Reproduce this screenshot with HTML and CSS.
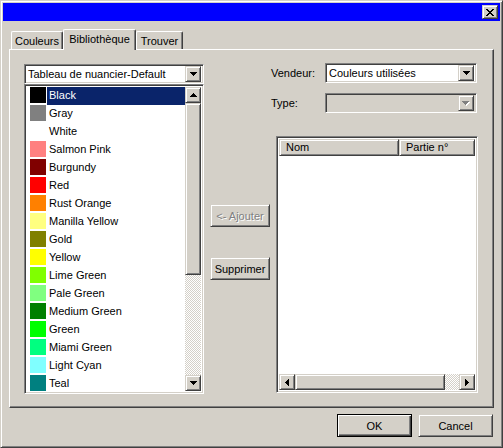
FILE: index.html
```html
<!DOCTYPE html>
<html lang="fr">
  <head>
    <meta charset="UTF-8" />
    <title>Bibliothèque de couleurs</title>
    <link rel="stylesheet" href="styles.css">
  </head>
  <body>
    <div class="window">
      <!-- barre de titre -->
      <div class="titlebar">
        <span class="close-btn raised">
          <svg width="8" height="7" viewBox="0 0 8 7" shape-rendering="crispEdges">
            <path d="M0 0h2v1h-2z M6 0h2v1h-2z M1 1h2v1h-2z M5 1h2v1h-2z M2 2h4v1h-4z M3 3h2v1h-2z M2 4h4v1h-4z M1 5h2v1h-2z M5 5h2v1h-2z M0 6h2v1h-2z M6 6h2v1h-2z" fill="#000"/>
          </svg>
        </span>
      </div>

      <div class="dialog-body">
        <!-- onglets -->
        <div class="tabs">
          <div class="tab">Couleurs</div>
          <div class="tab active">Bibliothèque</div>
          <div class="tab">Trouver</div>
        </div>

        <div class="panel">
          <!-- colonne bibliothèque -->
          <div class="col-library">
            <div class="combo sunken">
              <span class="combo-text">Tableau de nuancier-Default</span>
              <span class="arrow-btn raised">
                <svg width="7" height="4" viewBox="0 0 7 4" shape-rendering="crispEdges"><path d="M0 0h7v1h-7z M1 1h5v1h-5z M2 2h3v1h-3z M3 3h1v1h-1z" fill="#000"/></svg>
              </span>
            </div>
            <div class="swatch-list sunken">
              <ul class="swatches">
                <li class="swatch-item selected"><span class="chip" style="background:#000000"></span><span class="name">Black</span></li>
                <li class="swatch-item"><span class="chip" style="background:#808080"></span><span class="name">Gray</span></li>
                <li class="swatch-item"><span class="chip" style="background:#ffffff"></span><span class="name">White</span></li>
                <li class="swatch-item"><span class="chip" style="background:#ff8080"></span><span class="name">Salmon Pink</span></li>
                <li class="swatch-item"><span class="chip" style="background:#800000"></span><span class="name">Burgundy</span></li>
                <li class="swatch-item"><span class="chip" style="background:#ff0000"></span><span class="name">Red</span></li>
                <li class="swatch-item"><span class="chip" style="background:#ff8000"></span><span class="name">Rust Orange</span></li>
                <li class="swatch-item"><span class="chip" style="background:#ffff80"></span><span class="name">Manilla Yellow</span></li>
                <li class="swatch-item"><span class="chip" style="background:#808000"></span><span class="name">Gold</span></li>
                <li class="swatch-item"><span class="chip" style="background:#ffff00"></span><span class="name">Yellow</span></li>
                <li class="swatch-item"><span class="chip" style="background:#80ff00"></span><span class="name">Lime Green</span></li>
                <li class="swatch-item"><span class="chip" style="background:#80ff80"></span><span class="name">Pale Green</span></li>
                <li class="swatch-item"><span class="chip" style="background:#008000"></span><span class="name">Medium Green</span></li>
                <li class="swatch-item"><span class="chip" style="background:#00ff00"></span><span class="name">Green</span></li>
                <li class="swatch-item"><span class="chip" style="background:#00ff80"></span><span class="name">Miami Green</span></li>
                <li class="swatch-item"><span class="chip" style="background:#80ffff"></span><span class="name">Light Cyan</span></li>
                <li class="swatch-item"><span class="chip" style="background:#008080"></span><span class="name">Teal</span></li>
              </ul>
              <div class="vscroll">
                <span class="arrow-btn raised">
                  <svg width="7" height="4" viewBox="0 0 7 4" shape-rendering="crispEdges"><path d="M3 0h1v1h-1z M2 1h3v1h-3z M1 2h5v1h-5z M0 3h7v1h-7z" fill="#000"/></svg>
                </span>
                <span class="thumb raised"></span>
                <span class="track"></span>
                <span class="arrow-btn raised">
                  <svg width="7" height="4" viewBox="0 0 7 4" shape-rendering="crispEdges"><path d="M0 0h7v1h-7z M1 1h5v1h-5z M2 2h3v1h-3z M3 3h1v1h-1z" fill="#000"/></svg>
                </span>
              </div>
            </div>
          </div>

          <!-- boutons du milieu -->
          <div class="col-actions">
            <button class="button raised disabled">&lt;- Ajouter</button>
            <button class="button raised">Supprimer</button>
          </div>

          <!-- colonne vendeur -->
          <div class="col-vendor">
            <div class="field-row">
              <label class="field-label">Vendeur:</label>
              <div class="combo sunken wide">
                <span class="combo-text">Couleurs utilisées</span>
                <span class="arrow-btn raised">
                  <svg width="7" height="4" viewBox="0 0 7 4" shape-rendering="crispEdges"><path d="M0 0h7v1h-7z M1 1h5v1h-5z M2 2h3v1h-3z M3 3h1v1h-1z" fill="#000"/></svg>
                </span>
              </div>
            </div>
            <div class="field-row type-row">
              <label class="field-label">Type:</label>
              <div class="combo sunken wide disabled">
                <span class="combo-text"></span>
                <span class="arrow-btn raised">
                  <svg width="8" height="5" viewBox="0 0 8 5" shape-rendering="crispEdges"><path d="M1 1h7v1h-7z M2 2h5v1h-5z M3 3h3v1h-3z M4 4h1v1h-1z" fill="#fff"/><path d="M0 0h7v1h-7z M1 1h5v1h-5z M2 2h3v1h-3z M3 3h1v1h-1z" fill="#808080"/></svg>
                </span>
              </div>
            </div>

            <div class="parts-table sunken">
              <div class="table-head">
                <span class="head-cell col-nom raised">Nom</span>
                <span class="head-cell col-partie raised">Partie n°</span>
              </div>
              <div class="table-body"></div>
              <div class="hscroll">
                <span class="arrow-btn raised">
                  <svg width="4" height="7" viewBox="0 0 4 7" shape-rendering="crispEdges"><path d="M3 0h1v7h-1z M2 1h1v5h-1z M1 2h1v3h-1z M0 3h1v1h-1z" fill="#000"/></svg>
                </span>
                <span class="hthumb raised"></span>
                <span class="track"></span>
                <span class="arrow-btn raised">
                  <svg width="4" height="7" viewBox="0 0 4 7" shape-rendering="crispEdges"><path d="M0 0h1v7h-1z M1 1h1v5h-1z M2 2h1v3h-1z M3 3h1v1h-1z" fill="#000"/></svg>
                </span>
              </div>
            </div>
          </div>
        </div>

        <!-- boutons OK / Annuler -->
        <div class="dialog-buttons">
          <button class="button raised default">OK</button>
          <button class="button raised">Cancel</button>
        </div>
      </div>
    </div>
  </body>
</html>
```

FILE: styles.css
```css
/* dialogue style Windows 2000 */
* {
  box-sizing: border-box;
}

body {
  margin: 0;
  background-color: #d4d0c8;
  font-family: "Liberation Sans", Arial, sans-serif;
  font-size: 11px;
  color: #000;
}

.window {
  width: 503px;
  height: 448px;
  padding: 2px;
  background-color: #d4d0c8;
  border: 1px solid;
  border-color: #d4d0c8 #404040 #404040 #d4d0c8;
  box-shadow: inset 1px 1px #fff, inset -1px -1px #808080;
}

/* bordures 3D */
.raised {
  border: 1px solid;
  border-color: #d4d0c8 #404040 #404040 #d4d0c8;
  box-shadow: inset 1px 1px #fff, inset -1px -1px #808080;
  background-color: #d4d0c8;
}

.sunken {
  border: 1px solid;
  border-color: #808080 #fff #fff #808080;
  box-shadow: inset 1px 1px #404040, inset -1px -1px #d4d0c8;
}

.titlebar {
  height: 18px;
  background-color: #0000ff;
  display: flex;
  justify-content: flex-end;
  align-items: center;
  padding-right: 2px;
}

.close-btn {
  width: 16px;
  height: 14px;
  display: flex;
  align-items: center;
  justify-content: center;
}

.dialog-body {
  padding: 8px 6px 0 6px;
}

/* onglets */
.tabs {
  display: flex;
  align-items: flex-end;
  height: 20px;
  padding-left: 2px;
}

.tab {
  height: 18px;
  padding: 0 6px;
  display: flex;
  align-items: center;
  justify-content: center;
  border: 1px solid;
  border-bottom: none;
  border-color: #fff #404040 #404040 #fff;
  box-shadow: inset -1px 0 #808080;
  border-radius: 2px 2px 0 0;
  background-color: #d4d0c8;
}

.tab:nth-child(1) {
  width: 52px;
}

.tab:nth-child(3) {
  width: 47px;
}

.tab.active {
  width: 73px;
  height: 21px;
  margin-bottom: -1px;
  padding-bottom: 3px;
  position: relative;
  z-index: 1;
}

.panel {
  width: 485px;
  height: 359px;
  display: flex;
  align-items: flex-start;
  padding: 13px 0 0 14px;
  border: 1px solid;
  border-color: #fff #404040 #404040 #fff;
  box-shadow: inset -1px -1px #808080;
}

/* liste de nuancier */
.col-library {
  width: 180px;
  margin-top: 1px;
}

.combo {
  height: 20px;
  display: flex;
  align-items: center;
  background: #fff;
  padding: 2px;
}

.combo-text {
  flex: 1;
  padding-left: 1px;
  white-space: nowrap;
  overflow: hidden;
}

.combo.disabled {
  background-color: #d4d0c8;
}

.arrow-btn {
  width: 16px;
  height: 16px;
  flex-shrink: 0;
  display: flex;
  align-items: center;
  justify-content: center;
}

.arrow-btn svg {
  display: block;
}

.swatch-list {
  height: 310px;
  display: flex;
  padding: 2px;
  background: #fff;
}

.swatches {
  list-style: none;
  margin: 0;
  padding: 0;
  flex: 1;
}

.swatch-item {
  height: 18px;
  display: flex;
  align-items: flex-start;
}

.chip {
  width: 16px;
  height: 16px;
  margin: 0 1px 0 3px;
}

.name {
  flex: 1;
  height: 18px;
  line-height: 17px;
  padding-left: 2px;
  white-space: nowrap;
}

.swatch-item.selected .name {
  background-color: #0a246a;
  color: #fff;
}

.vscroll {
  width: 16px;
  display: flex;
  flex-direction: column;
}

.thumb {
  height: 172px;
}

.track {
  flex: 1;
  background-image: conic-gradient(#fff 25%, #d4d0c8 0 50%, #fff 0 75%, #d4d0c8 0);
  background-size: 2px 2px;
}

/* boutons */
.col-actions {
  width: 60px;
  margin: 141px 0 0 6px;
  display: flex;
  flex-direction: column;
  gap: 30px;
}

.button {
  height: 23px;
  width: 100%;
  font-family: inherit;
  font-size: 11px;
  color: #000;
  padding: 0;
  cursor: pointer;
}

.button.disabled {
  color: #808080;
  text-shadow: 1px 1px #fff;
}

/* vendeur */
.col-vendor {
  width: 207px;
  margin-left: 1px;
}

.field-row {
  display: flex;
  align-items: center;
}

.type-row {
  margin-top: 10px;
}

.field-label {
  width: 54px;
}

.combo.wide {
  width: 152px;
}

.parts-table {
  width: 202px;
  height: 257px;
  margin: 23px 0 0 5px;
  padding: 2px;
  background: #fff;
  display: flex;
  flex-direction: column;
}

.table-head {
  display: flex;
  height: 17px;
}

.head-cell {
  height: 17px;
  line-height: 15px;
  padding-left: 6px;
}

.col-nom {
  width: 120px;
}

.col-partie {
  flex: 1;
}

.table-body {
  flex: 1;
}

.hscroll {
  height: 16px;
  display: flex;
}

.hthumb {
  width: 150px;
}

.dialog-buttons {
  display: flex;
  justify-content: flex-end;
  gap: 6px;
  margin-top: 6px;
  padding-right: 1px;
}

.dialog-buttons .button {
  width: 75px;
}

.button.default {
  border-color: #000;
  box-shadow: inset 1px 1px #fff, inset -1px -1px #404040, inset -2px -2px #808080;
}
```
